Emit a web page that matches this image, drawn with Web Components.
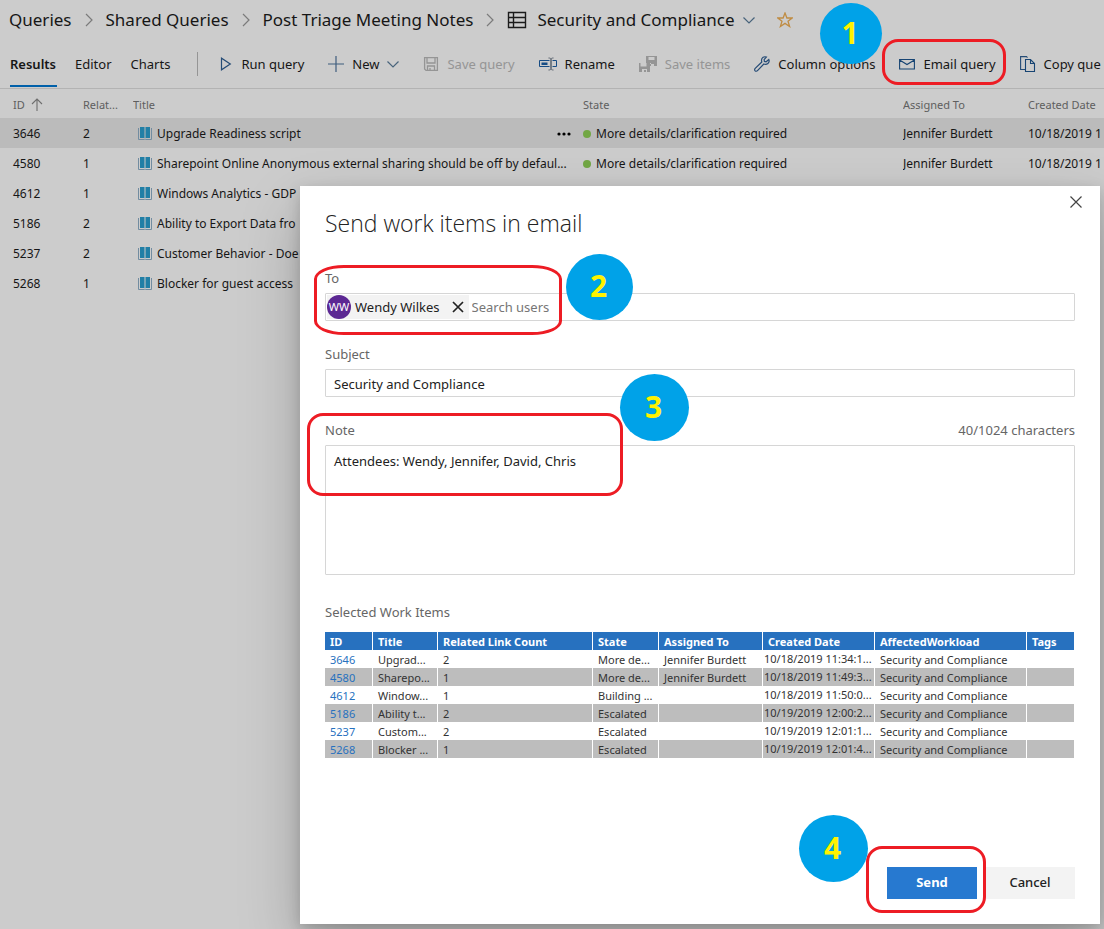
<!DOCTYPE html>
<html lang="en">
<head>
<meta charset="utf-8">
<title>Security and Compliance - Queries</title>
<style>
  html, body { margin: 0; min-height: 100vh; }
  body {
    position: relative;
    overflow: hidden;
    font: 13px/20px "Noto Sans", "Open Sans", sans-serif;
    color: #1c1c1c;
    background: #fff;
  }
  mail-overlay { position: absolute; inset: 0; }
</style>
</head>
<body>
<queries-page></queries-page>
<mail-overlay><mail-dialog></mail-dialog></mail-overlay>
<step-notes></step-notes>

<script>
const ICONS = {
  chevronRight: [8, 16, '<path d="M1 2l6 6-6 6" fill="none" stroke="#9a9a9a" stroke-width="1.2"/>'],
  chevronDown: [12, 12, '<path d="M.5 3.5L6 9l5.5-5.5" fill="none" stroke="#5b7d9b" stroke-width="1.2"/>'],
  list: [20, 20, '<path d="M1.5 2.5h17v15h-17zM1.5 7.500h17M1.500 12.500h17M6.500 2.500v15" fill="none" stroke="#222" stroke-width="1.4"/>'],
  star: [16, 16, '<path d="M8 1l1.900 5h5.300l-4.200 3.300 1.600 5.200L8 11.400l-4.600 3.100L5 9.300.8 6h5.300z" fill="none" stroke="#f0b055" stroke-width="1.3"/>'],
  play: [16, 16, '<path d="M4.500 2.200v11.600L13.300 8z" fill="none" stroke="#2f5f94" stroke-width="1.2"/>'],
  plus: [16, 16, '<path d="M8 0v16M0 8h16" fill="none" stroke="#4f759e" stroke-width="1.2"/>'],
  save: [16, 16, '<path d="M1.600 1.600h12.800v12.800H3L1.600 13zM4 1.600V7h8V1.600M4.500 14V10h7v4.400M7 12v2.400" fill="none" stroke="#bbb" stroke-width="1.3"/>'],
  rename: [18, 16, '<path d="M10.500 4.500h-10v6h10M13.500 4.500h4v6h-4" fill="none" stroke="#1c5fa6"/><path d="M2.500 6.500h6v2.500h-6z" fill="#1c5fa6"/><path d="M9.500 2c1.500 0 2.500.3 2.500 1.500v9c0 1.200-1 1.500-2.500 1.500M14.500 2c-1.500 0-2.500.3-2.500 1.500v9c0 1.200 1 1.500 2.500 1.500" fill="none" stroke="#6d7a88"/>'],
  saveAll: [18, 16, '<path d="M7 0h11v10h-6V7H7zM9.500 1v3h6V1zM11 10V8h4v2zM0 7h1.500v3.500h6V7H11v9H8v-3H3v3H0zM5 14h2v2H5z" fill="#bbb" fill-rule="evenodd"/>'],
  wrench: [16, 16, '<path d="M14.800 3.500l-2.700 2.300-1.700-.4-.3-1.700L12.400 1C10 .1 7.600 1.700 7.500 4.200c0 .7.100 1.200.3 1.800L1.200 12.400c-.8.800-.7 1.800-.1 2.400s1.700.6 2.400-.2L9.800 8c2.900 1.300 6.400-1.200 5-4.500z" fill="none" stroke="#2f5f94" stroke-width="1.2"/>'],
  mail: [16, 16, '<path d="M.6 3.500h14.800v9.500H.6zM.6 4l7.400 4.500L15.400 4" fill="none" stroke="#1d5690" stroke-width="1.1"/>'],
  copy: [16, 16, '<path d="M5.500 13.500H.6V.6h5.900l1 1" fill="none" stroke="#2f5f94" stroke-width="1.1"/><path d="M5.500 3.500h5l4 4v8h-9zM10.500 3.500v4h4" fill="none" stroke="#1d5690" stroke-width="1.1"/>'],
  up: [12, 14, '<path d="M6 13V1.500M1 6l5-5 5 5" fill="none" stroke="#8a8a8a" stroke-width="1.1"/>'],
  book: [16, 14, '<path d="M3 0h4.500v11H3zM8.500 0H13v11H8.500z" fill="#2a9fd0"/><path d="M1.500 1v11.500h5.700l.8-.6.800.6h5.700V1" fill="none" stroke="#8fb0c8"/>'],
  dots: [14, 4, '<circle cx="2" cy="2" r="1.600"/><circle cx="7" cy="2" r="1.600"/><circle cx="12" cy="2" r="1.600"/>'],
  close: [12, 12, '<path d="M.5.5l11 11M11.500.5l-11 11" fill="none" stroke="#444" stroke-width="1.2"/>'],
  remove: [12, 12, '<path d="M1 1l10 10M11 1L1 11" fill="none" stroke="#222" stroke-width="1.7"/>']
};

function define(name, render) {
  customElements.define(name, class extends HTMLElement {
    constructor() {
      super();
      this.attachShadow({ mode: 'open' });
    }
    connectedCallback() {
      this.shadowRoot.innerHTML = render(this);
    }
  });
}

define('ui-icon', el => {
  const [w, h, body] = ICONS[el.getAttribute('name')];
  return `<style>:host{display:block;flex:none}svg{display:block}</style>
    <svg width="${w}" height="${h}" viewBox="0 0 ${w} ${h}" aria-hidden="true">${body}</svg>`;
});

define('bread-crumbs', () => `
  <style>
    :host { display: block; }
    nav { display: flex; align-items: center; height: 40px; padding: 0 9px; font-size: 17px; white-space: nowrap; }
    a { color: inherit; text-decoration: none; }
    .sep { margin: 0 13px; }
    .list { margin: 0 10px 0 0; }
    .down { margin: 0 22px 0 8px; }
  </style>
  <nav aria-label="Breadcrumb">
    <a href="#queries">Queries</a><ui-icon class="sep" name="chevronRight"></ui-icon>
    <a href="#shared">Shared Queries</a><ui-icon class="sep" name="chevronRight"></ui-icon>
    <a href="#triage">Post Triage Meeting Notes</a><ui-icon class="sep" name="chevronRight"></ui-icon>
    <ui-icon class="list" name="list"></ui-icon><a href="#query">Security and Compliance</a>
    <ui-icon class="down" name="chevronDown"></ui-icon><ui-icon name="star"></ui-icon>
  </nav>`);

define('tool-button', el => `
  <style>
    :host { display: block; flex: none; }
    button { display: flex; align-items: center; gap: 8px; padding: 0; border: 0; background: none; font: inherit; color: inherit; white-space: nowrap; }
    button:disabled { color: #bbb; }
  </style>
  <button type="button" ${el.hasAttribute('disabled') ? 'disabled' : ''}>
    <ui-icon name="${el.getAttribute('icon')}"></ui-icon><slot></slot>
    ${el.hasAttribute('menu') ? '<ui-icon name="chevronDown"></ui-icon>' : ''}
  </button>`);

define('query-toolbar', () => `
  <style>
    :host { display: flex; align-items: center; height: 48px; border-bottom: 1px solid #e0e0e0; overflow: hidden; }
    nav { display: flex; gap: 18px; height: 47px; align-self: flex-start; padding-left: 10px; }
    nav a { display: flex; align-items: center; padding-top: 3px; padding-right: 1px; color: inherit; text-decoration: none; border-bottom: 2px solid transparent; }
    nav a[aria-current] { font-weight: 600; border-color: #0078d4; }
    .rule { flex: none; width: 1px; height: 24px; margin: 0 19px 0 26px; background: #bbb; }
    .tools { display: flex; gap: 24px; }
  </style>
  <nav><a href="#results" aria-current="page">Results</a><a href="#editor">Editor</a><a href="#charts">Charts</a></nav>
  <span class="rule"></span>
  <div class="tools">
    <tool-button icon="play">Run query</tool-button>
    <tool-button icon="plus" menu>New</tool-button>
    <tool-button icon="save" disabled>Save query</tool-button>
    <tool-button icon="rename">Rename</tool-button>
    <tool-button icon="saveAll" disabled>Save items</tool-button>
    <tool-button icon="wrench">Column options</tool-button>
    <tool-button icon="mail">Email query</tool-button>
    <tool-button icon="copy">Copy que</tool-button>
  </div>`);

const RESULTS = [
  ['3646', '2', 'Upgrade Readiness script', 'Jennifer Burdett'],
  ['4580', '1', 'Sharepoint Online Anonymous external sharing should be off by defaul...', 'Jennifer Burdett'],
  ['4612', '1', 'Windows Analytics - GDP', ''],
  ['5186', '2', 'Ability to Export Data fro', ''],
  ['5237', '2', 'Customer Behavior - Doe', ''],
  ['5268', '1', 'Blocker for guest access', '']
];

define('results-grid', () => `
  <style>
    :host { display: block; overflow: hidden; font-size: 12px; }
    table { width: 100%; table-layout: fixed; border-collapse: collapse; }
    th, td { box-sizing: border-box; padding: 2px 0 0; height: 30px; text-align: left; font-weight: 400; white-space: nowrap; overflow: hidden; }
    th { height: 29px; color: #777; font-size: 11px; }
    th:first-child, td:first-child { padding-left: 13px; }
    tr.selected { background: #eaeaea; }
    .sort, .title, .state { display: flex; align-items: center; }
    .sort { gap: 6px; }
    .title { gap: 4px; padding: 0 12px 0 4px; }
    .title ui-icon:last-child { margin-left: auto; }
    .state { gap: 5px; }
    .state::before { content: ""; width: 8px; height: 8px; border-radius: 50%; background: #8fd155; }
  </style>
  <table>
    <colgroup><col style="width:83px"><col style="width:50px"><col style="width:450px"><col style="width:320px"><col style="width:125px"><col></colgroup>
    <thead><tr><th><span class="sort">ID <ui-icon name="up"></ui-icon></span></th><th>Relat...</th><th>Title</th><th>State</th><th>Assigned To</th><th>Created Date</th></tr></thead>
    <tbody>${RESULTS.map(([id, n, title, who], i) => `
      <tr class="${i ? '' : 'selected'}"><td>${id}</td><td>${n}</td>
        <td><div class="title"><ui-icon name="book"></ui-icon><span>${title}</span>${i ? '' : '<ui-icon name="dots"></ui-icon>'}</div></td>
        <td>${who ? '<div class="state">More details/clarification required</div>' : ''}</td>
        <td>${who}</td><td>10/18/2019 1</td></tr>`).join('')}
    </tbody>
  </table>`);

define('queries-page', () => `
  <style>:host { display: block; }</style>
  <bread-crumbs></bread-crumbs>
  <query-toolbar></query-toolbar>
  <results-grid></results-grid>`);

define('mail-overlay', () => `
  <style>
    :host { display: grid; box-sizing: border-box; padding: 186px 4px 5px 300px; background: rgba(0, 0, 0, .2); }
  </style>
  <slot></slot>`);

const HEADS = ['ID', 'Title', 'Related Link Count', 'State', 'Assigned To', 'Created Date', 'AffectedWorkload', 'Tags'];
const WIDTHS = [48, 65, 155, 66, 104, 112, 152, 48];
const ITEMS = [
  ['3646', 'Upgrad...', '2', 'More de...', 'Jennifer Burdett', '10/18/2019 11:34:1...'],
  ['4580', 'Sharepo...', '1', 'More de...', 'Jennifer Burdett', '10/18/2019 11:49:3...'],
  ['4612', 'Window...', '1', 'Building ...', '', '10/18/2019 11:50:0...'],
  ['5186', 'Ability t...', '2', 'Escalated', '', '10/19/2019 12:00:2...'],
  ['5237', 'Custom...', '2', 'Escalated', '', '10/19/2019 12:01:1...'],
  ['5268', 'Blocker ...', '1', 'Escalated', '', '10/19/2019 12:01:4...']
];

define('work-items', () => `
  <style>
    :host { display: block; font-size: 11px; line-height: 16px; }
    table { width: 100%; table-layout: fixed; border-collapse: separate; border-spacing: 0; }
    th, td { box-sizing: border-box; height: 18px; padding: 2px 0 0 5px; text-align: left; white-space: nowrap; overflow: hidden; border-right: 1px solid #fff; }
    th { background: #2771bf; color: #fff; font-weight: 700; }
    td { color: #333; }
    td.date { padding: 0 0 0 1px; vertical-align: middle; }
    tbody tr:nth-child(even) { background: #bdbdbd; }
    a { color: #2771bf; text-decoration: none; }
  </style>
  <table>
    <colgroup>${WIDTHS.map(w => `<col style="width:${w}px">`).join('')}</colgroup>
    <thead><tr>${HEADS.map(h => `<th>${h}</th>`).join('')}</tr></thead>
    <tbody>${ITEMS.map(([id, t, n, s, who, when]) => `
      <tr><td><a href="#${id}">${id}</a></td><td>${t}</td><td>${n}</td><td>${s}</td><td>${who}</td><td class="date">${when}</td><td>Security and Compliance</td><td></td></tr>`).join('')}
    </tbody>
  </table>`);

define('mail-dialog', () => `
  <style>
    :host {
      display: flex; flex-direction: column; position: relative; box-sizing: border-box;
      padding: 22px 25px 25px; background: #fff;
      box-shadow: 0 26px 58px rgba(0, 0, 0, .22), 0 5px 14px rgba(0, 0, 0, .18);
    }
    * { box-sizing: border-box; }
    h1 { margin: 0 0 30px; font: 300 23px/30px "Open Sans", sans-serif; color: #222; }
    .close { position: absolute; top: 10px; right: 18px; padding: 0; border: 0; background: none; }
    .caption { display: flex; justify-content: space-between; margin-bottom: 5px; color: #666; }
    .box { width: 100%; height: 28px; margin: 0 0 23px; border: 1px solid #d6d6d6; border-radius: 1px; }
    input, textarea { font: inherit; color: #222; background: none; outline: none; }
    .people { display: flex; align-items: center; padding: 1px; gap: 3px; }
    .chip { display: flex; align-items: center; gap: 4px; height: 24px; padding-right: 5px; background: #f3f3f3; color: #222; white-space: nowrap; }
    .face { display: grid; place-items: center; width: 24px; height: 24px; border-radius: 50%; background: #5c2893; color: #fff; font-size: 11px; }
    .chip button { margin-left: 8px; padding: 0; border: 0; background: none; }
    .people input { flex: 1; min-width: 0; padding: 0; border: 0; }
    .people input::placeholder { color: #767676; opacity: 1; }
    input.box { padding: 2px 8px 0; }
    textarea.box { display: block; height: 130px; padding: 5px 8px; margin-bottom: 27px; resize: none; }
    footer { display: flex; justify-content: flex-end; gap: 8px; margin-top: auto; padding-top: 24px; }
    work-items { margin-top: 5px; }
    footer button { width: 90px; height: 32px; padding: 0 0 2px; border: 0; font: inherit; font-weight: 500; color: #222; background: #f3f3f3; }
    footer .primary { font-weight: 700; color: #fff; background: #2779d0; }
  </style>
  <h1>Send work items in email</h1>
  <button class="close" type="button" aria-label="Close"><ui-icon name="close"></ui-icon></button>
  <label class="caption" for="to">To</label>
  <div class="box people">
    <span class="chip"><span class="face">WW</span>Wendy Wilkes<button type="button" aria-label="Remove"><ui-icon name="remove"></ui-icon></button></span>
    <input id="to" type="text" placeholder="Search users">
  </div>
  <label class="caption" for="subject">Subject</label>
  <input class="box" id="subject" type="text" value="Security and Compliance">
  <div class="caption"><label for="note">Note</label><span>40/1024 characters</span></div>
  <textarea class="box" id="note">Attendees: Wendy, Jennifer, David, Chris</textarea>
  <div class="caption">Selected Work Items</div>
  <work-items></work-items>
  <footer><button class="primary" type="button">Send</button><button type="button">Cancel</button></footer>`);

define('step-notes', () => `
  <style>
    .ring { position: absolute; box-sizing: border-box; border: 3px solid #ed1c24; border-radius: 16px; pointer-events: none; }
    .num { position: absolute; display: grid; place-items: center; box-sizing: border-box; padding: 0 2px 2px 0; border-radius: 50%; background: #00a2e8; color: #fff200; font-size: 30px; font-weight: 700; }
  </style>
  <div class="ring" style="left:882px;top:39px;width:124px;height:46px"></div>
  <div class="ring" style="left:314px;top:265px;width:248px;height:70px;border-radius:30px/14px"></div>
  <div class="ring" style="left:307px;top:413px;width:316px;height:83px"></div>
  <div class="ring" style="left:866px;top:846px;width:120px;height:67px"></div>
  <div class="num" style="left:820px;top:3px;width:62px;height:61px">1</div>
  <div class="num" style="left:566px;top:254px;width:67px;height:66px">2</div>
  <div class="num" style="left:620px;top:374px;width:69px;height:67px">3</div>
  <div class="num" style="left:799px;top:815px;width:69px;height:67px">4</div>`);
</script>
</body>
</html>
